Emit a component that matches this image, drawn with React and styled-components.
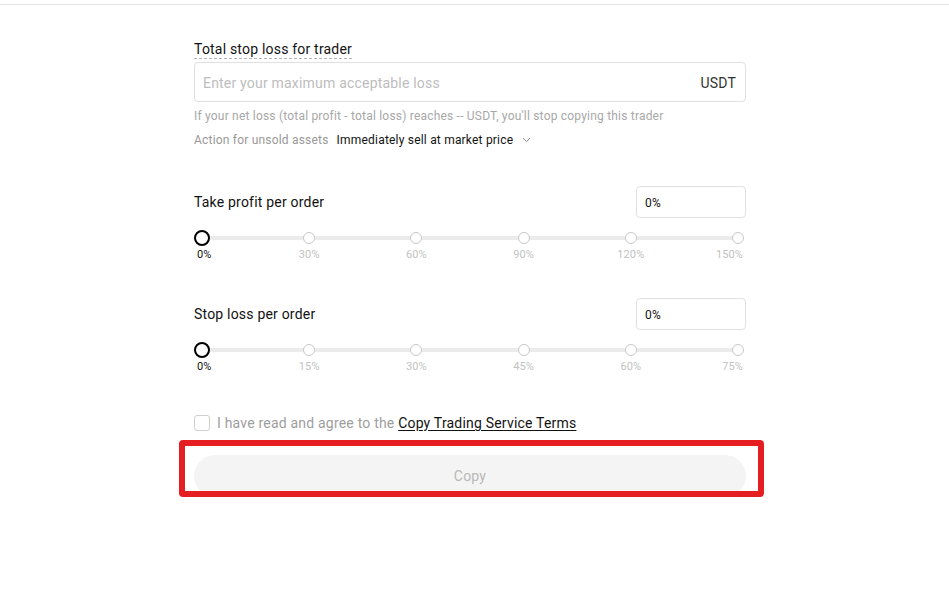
import React from "react";
import styled, { createGlobalStyle } from "styled-components";

const Global = createGlobalStyle`
  html, body { margin: 0; padding: 0; background: #fff; }
  body { font-family: Roboto, "Liberation Sans", Arial, sans-serif; letter-spacing: 0.2px; color: #121212; }
  * { box-sizing: border-box; }
`;

const Page = styled.div`
  position: relative;
  width: 949px;
  height: 614px;
  overflow: hidden;
  background: #fff;
`;

const TopBar = styled.div`
  height: 5px;
  border-bottom: 1px solid #e3e3e3;
`;

const Column = styled.div`
  width: 552px;
  margin-left: 194px;
  display: flex;
  flex-direction: column;
`;

const FieldLabel = styled.div`
  margin-top: 35px;
  align-self: flex-start;
  font-size: 14px;
  line-height: 18px;
  color: #121212;
  border-bottom: 1px dashed #b5b5b5;
`;

const InputBox = styled.div`
  margin-top: 3px;
  height: 40px;
  border: 1px solid #e0e0e0;
  border-radius: 4px;
  display: flex;
  align-items: center;
  justify-content: space-between;
  padding: 2px 9px 0 8px;
  font-size: 14px;
`;

const Placeholder = styled.span`
  color: #bdbdbd;
`;

const Unit = styled.span`
  color: #333;
`;

const Hint = styled.div`
  margin-top: 6px;
  font-size: 12px;
  line-height: 16px;
  color: #a8a8a8;
`;

const ActionRow = styled.div`
  margin-top: 8px;
  display: flex;
  align-items: center;
  font-size: 12px;
  line-height: 16px;
  color: #999;
  gap: 8px;
`;

const ActionValue = styled.span`
  color: #121212;
  display: inline-flex;
  align-items: center;
  gap: 9px;
`;

const Section = styled.div`
  margin-top: ${(p) => p.$top}px;
  display: flex;
  flex-direction: column;
`;

const SectionHead = styled.div`
  display: flex;
  align-items: center;
  justify-content: space-between;
`;

const SectionTitle = styled.div`
  font-size: 14px;
  line-height: 20px;
  color: #121212;
`;

const SmallInput = styled.div`
  width: 110px;
  height: 32px;
  border: 1px solid #e0e0e0;
  border-radius: 4px;
  display: flex;
  align-items: center;
  padding: 1px 0 0 8px;
  font-size: 12px;
  color: #121212;
`;

const SliderWrap = styled.div`
  margin-top: 12px;
  padding: 0 8px;
`;

const Rail = styled.div`
  position: relative;
  height: 16px;
`;

const Track = styled.div`
  position: absolute;
  left: 0;
  right: 0;
  top: 6px;
  height: 4px;
  border-radius: 2px;
  background: #ebebeb;
`;

const Dot = styled.span`
  position: absolute;
  top: 50%;
  width: ${(p) => (p.$active ? 16 : 12)}px;
  height: ${(p) => (p.$active ? 16 : 12)}px;
  border-radius: 50%;
  background: #fff;
  border: ${(p) => (p.$active ? "2px solid #000" : "1px solid #c8c8c8")};
  transform: translate(-50%, -50%);
`;

const Marks = styled.div`
  position: relative;
  height: 16px;
  margin-top: 1px;
`;

const Mark = styled.span`
  position: absolute;
  top: 0;
  font-size: 11px;
  line-height: 16px;
  letter-spacing: 0.1px;
  color: ${(p) => (p.$active ? "#121212" : "#c2c2c2")};
  white-space: nowrap;
`;

const AgreeRow = styled.div`
  margin-top: 38px;
  display: flex;
  align-items: center;
  gap: 7px;
  font-size: 14px;
  line-height: 20px;
  color: #9e9e9e;
`;

const Check = styled.span`
  width: 16px;
  height: 16px;
  border: 1px solid #d0d0d0;
  border-radius: 3px;
`;

const TermsLink = styled.a`
  color: #121212;
  text-decoration: underline;
  text-underline-offset: 2px;
`;

const CopyButton = styled.button`
  margin-top: 22px;
  height: 42px;
  border: none;
  border-radius: 21px;
  background: #f4f4f4;
  color: #b8b8b8;
  font-family: inherit;
  letter-spacing: inherit;
  font-size: 14px;
`;

const Annotation = styled.div`
  position: absolute;
  left: 179px;
  top: 440px;
  width: 585px;
  height: 57px;
  border: 6px solid #e51e21;
  border-radius: 4px;
  pointer-events: none;
`;

function Chevron() {
  return (
    <svg width="9" height="6" viewBox="0 0 9 6" fill="none">
      <path d="M1 1.2 L4.5 4.6 L8 1.2" stroke="#888" strokeWidth="1" />
    </svg>
  );
}

function Slider({ marks }) {
  const n = marks.length - 1;
  return (
    <SliderWrap>
      <Rail>
        <Track />
        {marks.map((m, i) => (
          <Dot key={m} $active={i === 0} style={{ left: `${(i / n) * 100}%` }} />
        ))}
      </Rail>
      <Marks>
        {marks.map((m, i) => {
          const pos = (i / n) * 100;
          let style;
          if (i === 0) style = { left: "-5px" };
          else if (i === n) style = { right: "-5px" };
          else style = { left: `${pos}%`, transform: "translateX(-50%)" };
          return (
            <Mark key={m} $active={i === 0} style={style}>
              {m}
            </Mark>
          );
        })}
      </Marks>
    </SliderWrap>
  );
}

export default function App() {
  return (
    <Page>
      <Global />
      <TopBar />
      <Column>
        <FieldLabel>Total stop loss for trader</FieldLabel>
        <InputBox>
          <Placeholder>Enter your maximum acceptable loss</Placeholder>
          <Unit>USDT</Unit>
        </InputBox>
        <Hint>If your net loss (total profit - total loss) reaches -- USDT, you'll stop copying this trader</Hint>
        <ActionRow>
          Action for unsold assets
          <ActionValue>
            Immediately sell at market price
            <Chevron />
          </ActionValue>
        </ActionRow>

        <Section $top={38}>
          <SectionHead>
            <SectionTitle>Take profit per order</SectionTitle>
            <SmallInput>0%</SmallInput>
          </SectionHead>
          <Slider marks={["0%", "30%", "60%", "90%", "120%", "150%"]} />
        </Section>

        <Section $top={35}>
          <SectionHead>
            <SectionTitle>Stop loss per order</SectionTitle>
            <SmallInput>0%</SmallInput>
          </SectionHead>
          <Slider marks={["0%", "15%", "30%", "45%", "60%", "75%"]} />
        </Section>

        <AgreeRow>
          <Check />
          <span>
            I have read and agree to the <TermsLink>Copy Trading Service Terms</TermsLink>
          </span>
        </AgreeRow>
        <CopyButton>Copy</CopyButton>
      </Column>
      <Annotation />
    </Page>
  );
}
